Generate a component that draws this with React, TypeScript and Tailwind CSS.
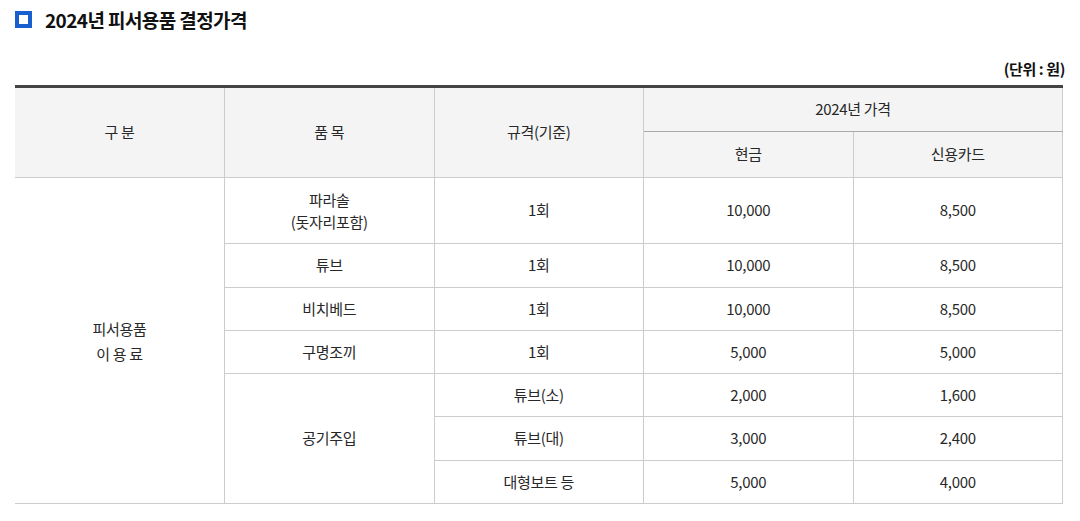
const rows = [
  { item: "튜브", spec: "1회", cash: "10,000", card: "8,500", h: "h-[44px]" },
  { item: "비치베드", spec: "1회", cash: "10,000", card: "8,500", h: "h-[43px]" },
  { item: "구명조끼", spec: "1회", cash: "5,000", card: "5,000", h: "h-[43px]" },
];

const air = [
  { spec: "튜브(소)", cash: "2,000", card: "1,600", h: "h-[43px]" },
  { spec: "튜브(대)", cash: "3,000", card: "2,400", h: "h-[44px]" },
  { spec: "대형보트 등", cash: "5,000", card: "4,000", h: "h-[43px]" },
];

const td = "border border-[#cccccc] text-center align-middle";

export default function App() {
  return (
    <div className="w-[1080px] h-[521px] bg-white px-[15px] pt-[7px] text-[#282828] font-['Noto_Sans_CJK_KR','Noto_Sans',sans-serif]">
      {/* title */}
      <div className="flex items-center gap-[13px] h-[24px]">
        <span className="w-[17px] h-[17px] border-[4px] border-[#1a5fd0] bg-white" />
        <h2 className="text-[19px] font-bold text-[#111] tracking-[-0.6px] leading-none">
          2024년 피서용품 결정가격
        </h2>
      </div>

      <p className="mt-[28px] text-right text-[15px] font-bold text-[#111] tracking-[-0.4px] leading-[20px]">
        (단위 : 원)
      </p>

      <table className="mt-[6px] w-[1048px] table-fixed border-collapse border-t-[3px] border-t-[#444] text-[15px] tracking-[-0.3px]">
        <thead className="bg-[#f4f4f4]">
          <tr className="h-[45px]">
            <th rowSpan={2} className={`${td} border-l-0 border-t-0 font-normal`}>구 분</th>
            <th rowSpan={2} className={`${td} border-t-0 font-normal`}>품 목</th>
            <th rowSpan={2} className={`${td} border-t-0 font-normal`}>규격(기준)</th>
            <th colSpan={2} className={`${td} border-t-0 border-b-[#aaaaaa] font-normal`}>2024년 가격</th>
          </tr>
          <tr className="h-[46px]">
            <th className={`${td} border-t-[#aaaaaa] font-normal`}>현금</th>
            <th className={`${td} border-t-[#aaaaaa] font-normal`}>신용카드</th>
          </tr>
        </thead>
        <tbody>
          <tr className="h-[66px]">
            <td rowSpan={7} className={`${td} border-l-0 leading-[25px]`}>
              피서용품
              <br />이 용 료
            </td>
            <td className={`${td} leading-[22px]`}>
              파라솔
              <br />
              (돗자리포함)
            </td>
            <td className={td}>1회</td>
            <td className={td}>10,000</td>
            <td className={td}>8,500</td>
          </tr>
          {rows.map((r) => (
            <tr key={r.item} className={r.h}>
              <td className={td}>{r.item}</td>
              <td className={td}>{r.spec}</td>
              <td className={td}>{r.cash}</td>
              <td className={td}>{r.card}</td>
            </tr>
          ))}
          {air.map((r, i) => (
            <tr key={r.spec} className={r.h}>
              {i === 0 && (
                <td rowSpan={3} className={td}>
                  공기주입
                </td>
              )}
              <td className={td}>{r.spec}</td>
              <td className={td}>{r.cash}</td>
              <td className={td}>{r.card}</td>
            </tr>
          ))}
        </tbody>
      </table>
    </div>
  );
}
